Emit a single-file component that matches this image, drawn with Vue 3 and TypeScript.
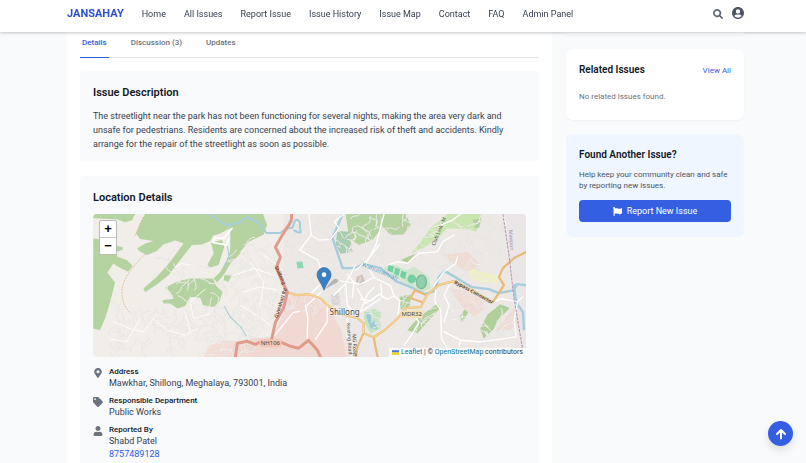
<script setup lang="ts">
import { ref } from 'vue'

const links = ['Home', 'All Issues', 'Report Issue', 'Issue History', 'Issue Map', 'Contact', 'FAQ', 'Admin Panel']
const tabs = ['Details', 'Discussion (3)', 'Updates']
const active = ref('Details')

const icons = {
  pin: { box: '0 0 384 512', d: 'M172.268 501.67C26.97 291.031 0 269.413 0 192 0 85.961 85.961 0 192 0s192 85.961 192 192c0 77.413-26.97 99.031-172.268 309.67-9.535 13.774-29.93 13.773-39.464 0zM192 272c44.183 0 80-35.817 80-80s-35.817-80-80-80-80 35.817-80 80 35.817 80 80 80z' },
  tag: { box: '0 0 512 512', d: 'M0 252.118V48C0 21.49 21.49 0 48 0h204.118a48 48 0 0 1 33.941 14.059l211.882 211.882c18.745 18.745 18.745 49.137 0 67.882L293.823 497.941c-18.745 18.745-49.137 18.745-67.882 0L14.059 286.059A48 48 0 0 1 0 252.118zM112 64c-26.51 0-48 21.49-48 48s21.49 48 48 48 48-21.49 48-48-21.49-48-48-48z' },
  user: { box: '0 0 448 512', d: 'M224 256c70.7 0 128-57.3 128-128S294.7 0 224 0 96 57.3 96 128s57.3 128 128 128zm89.6 32h-16.7c-22.2 10.2-46.9 16-72.9 16s-50.6-5.8-72.9-16h-16.7C60.2 288 0 348.2 0 422.4V464c0 26.5 21.5 48 48 48h352c26.5 0 48-21.5 48-48v-41.6c0-74.2-60.2-134.4-134.4-134.4z' },
}

const facts = [
  { icon: icons.pin, label: 'Address', value: 'Mawkhar, Shillong, Meghalaya, 793001, India', phone: '' },
  { icon: icons.tag, label: 'Responsible Department', value: 'Public Works', phone: '' },
  { icon: icons.user, label: 'Reported By', value: 'Shabd Patel', phone: '8757489128' },
]

// Minor streets: short wandering lines from a seeded generator, so every load draws the same town.
let seed = 7
const rand = () => {
  seed = (seed * 16807) % 2147483647
  return seed / 2147483647
}
function streets(count: number, x0: number, y0: number, w: number, h: number): string {
  let d = ''
  for (let i = 0; i < count; i++) {
    let x = x0 + rand() * w
    let y = y0 + rand() * h
    let a = rand() * 6.28
    d += `M${x.toFixed(1)} ${y.toFixed(1)}`
    for (let k = 0; k < 5; k++) {
      a += (rand() - 0.5) * 1.8
      x += Math.cos(a) * 3
      y += Math.sin(a) * 3
      d += `L${x.toFixed(1)} ${y.toFixed(1)}`
    }
  }
  return d
}
const minor = streets(130, 18, 95, 150, 46) + streets(90, 140, 30, 48, 75) + streets(140, 195, 5, 90, 95)
  + streets(240, 280, 5, 150, 135) + streets(20, 75, 45, 60, 40)
</script>

<template>
  <div class="page">
    <header class="bar">
      <a class="brand" href="#">JANSAHAY</a>
      <nav class="links">
        <a v-for="l in links" :key="l" href="#">{{ l }}</a>
      </nav>
      <button class="icon-btn search" aria-label="Search">
        <svg width="10" height="10" viewBox="-12 -12 536 536"><path d="M416 208c0 45.9-14.9 88.3-40 122.7L502.6 457.4c12.5 12.5 12.5 32.8 0 45.3s-32.8 12.5-45.3 0L330.7 376c-34.4 25.2-76.8 40-122.7 40C93.1 416 0 322.9 0 208S93.1 0 208 0S416 93.1 416 208zM208 352a144 144 0 1 0 0-288 144 144 0 1 0 0 288z" /></svg>
      </button>
      <button class="icon-btn account" aria-label="Account">
        <svg width="12" height="12" viewBox="0 8 496 496"><path d="M248 8C111 8 0 119 0 256s111 248 248 248 248-111 248-248S385 8 248 8zm0 96c48.6 0 88 39.4 88 88s-39.4 88-88 88-88-39.4-88-88 39.4-88 88-88zm0 344c-58.7 0-111.3-26.6-146.5-68.2 18.8-35.4 55.6-59.8 98.5-59.8 2.4 0 4.8.4 7.1 1.1 13 4.2 26.6 6.9 40.9 6.9 14.3 0 28-2.7 40.9-6.9 2.3-.7 4.7-1.1 7.1-1.1 42.9 0 79.7 24.4 98.5 59.8C359.3 421.4 306.7 448 248 448z" /></svg>
      </button>
    </header>

    <div class="body">
      <main class="panel">
        <div class="tabs" role="tablist">
          <button v-for="t in tabs" :key="t" role="tab" :aria-selected="active === t" :class="{ on: active === t }" @click="active = t">{{ t }}</button>
        </div>

        <section class="box">
          <h2>Issue Description</h2>
          <p class="story">The streetlight near the park has not been functioning for several nights, making the area very dark and unsafe for pedestrians. Residents are concerned about the increased risk of theft and accidents. Kindly arrange for the repair of the streetlight as soon as possible.</p>
        </section>

        <section class="box">
          <h2>Location Details</h2>
          <div class="map">
            <svg class="tiles" viewBox="0 0 432 143" preserveAspectRatio="xMidYMid slice" role="img" aria-label="Map of Shillong">
              <rect width="432" height="143" fill="#f1eee9" />
              <rect x="190" width="242" height="143" fill="#e9e6e2" opacity=".7" />
              <!-- land cover -->
              <g transform="translate(-3 -29) scale(.33333)" fill="#b5d3a0">
                <path d="M10 87H135L126 106 105 112 80 103 10 100ZM10 160 45 165 78 182 98 186 98 194 80 200 82 215 110 225 128 243 114 260 85 246 70 235 52 262 75 292 60 352 45 400 30 435 10 430Z" />
                <path d="M165 87 150 115 138 145 150 162 190 168 165 175 140 190 150 200 172 210 200 198 220 178 255 166 272 172 280 175 240 230 200 275 160 310 165 321 200 298 235 270 270 225 305 180 335 178 360 168 368 152 390 145 420 130 450 130V87Z" />
                <path d="M362 172 395 165 402 185 385 240 358 248 352 238 370 205ZM450 140 425 165 415 215 390 260 370 280 380 292 400 270 420 235 450 205ZM402 270 424 270 415 290 400 285Z" />
                <path d="M217 345 250 341 240 320 225 308 262 288 300 280 368 280 377 302 397 320 388 350 370 365 338 360 330 338 300 335 285 362 262 370 240 355 220 355Z" />
                <path d="M340 515 360 480 400 465 450 468V515Z" fill="#f3dcd6" />
              </g>
              <g transform="translate(137 -9) scale(.33333)" fill="#b5d3a0">
                <path d="M0 27H98L110 60 100 88 55 110 30 140 0 162Z" />
                <path d="M345 27H410L450 27V75L425 105 385 120 355 100 350 60Z" />
                <path d="M320 78 355 80 366 140 330 146 315 120Z" fill="#a9cdb0" />
                <path d="M165 265 230 270 290 300 330 370 350 455H0L10 415 60 400 125 395 160 320Z" fill="#f1d9d3" />
                <path d="M378 215 395 208 404 230 392 242 376 230Z" fill="#d0c5bc" />
                <path d="M300 270 325 262 330 300 305 300Z" fill="#d9d5d6" />
                <path d="M400 320 430 310 450 318V370L420 385 400 350Z" fill="#c2e4c0" />
                <path d="M404 325 416 318 424 345 445 355 440 372 420 370Z" fill="#9ccbd4" />
              </g>
              <g transform="translate(287 -9) scale(.33333)" fill="#c9e6b0">
                <path d="M0 27H75L90 60 68 88 30 90 5 65Z" fill="#b5d3a0" />
                <path d="M155 62 180 45 200 27H300L302 50 285 80 250 72 200 70 175 95 130 128 90 145 118 112Z" />
                <path d="M275 45 300 40 295 68 282 70ZM60 165 105 145 80 172ZM55 275 90 268 88 300 62 322ZM80 375 110 340 170 295 178 308 140 350 110 385ZM298 370 320 328 358 297 387 308 350 345 338 372 308 400ZM232 340 252 312 262 322 245 350Z" fill="#b0d09b" />
                <path d="M270 190 300 200 355 210 355 235 300 232 265 215Z" fill="#eef0c8" />
                <path d="M185 150 260 140 300 180 260 200 215 175ZM205 250 250 255 300 282 312 310 282 335 245 305ZM380 330 415 290 425 350 385 375 345 375Z" fill="#efdcd5" />
                <path d="M370 27H438V455H430L400 280Z" fill="#eae4e8" opacity=".6" />
                <path d="M10 190 22 178 40 180 80 195 100 185 145 215 150 250 120 262 70 235Z" fill="#cde6cb" />
              </g>
              <path :d="minor" fill="none" stroke="#d8d4d0" stroke-width=".9" />
              <path :d="minor" fill="none" stroke="#fdfcfb" stroke-width=".5" />
              <path d="M203 47.600 209 47.300 210 54 204 54.300Z" fill="#8bd8b2" />
              <g transform="translate(287 -9) scale(.33333)" fill="#74d0a4">
                <path d="M24 180 40 184 36 202 20 196ZM44 188 58 192 54 212 40 206ZM62 196 78 202 73 222 58 215Z" />
                <circle cx="93" cy="221" r="13" />
                <ellipse cx="122" cy="230" rx="15" ry="20" fill="#8fcfae" stroke="#7fb99b" stroke-width="4" />
              </g>
              <!-- rivers -->
              <g fill="none" stroke="#a5cddb" stroke-linejoin="round">
                <path d="M117 0 125 6 133 11 145 9 153 3 165 8 173 19 187 19C191 15 195 14 198 14S199 5 204 6 205 15 207 17 203 19 200 16" stroke-width="2" />
                <path d="M133 30C138 42 134 46 130 55M131 92 137 103 147 112 153 122" stroke-width="1" />
                <path d="M249 0 239 24 249 54 261 54 270 50 287 54 302 67 317 73 331 80 341 77 345 63 351 57 358 61 378 73 395 75 405 79 420 76 423 70 432 71M420 70 422 88 429 98 430 116" stroke-width="2.4" />
              </g>
              <path d="M50 3 42 22M52 40C36 56 28 68 29 80S33 92 36 98" fill="none" stroke="#e2ad82" stroke-width=".7" stroke-dasharray="2 1" />
              <!-- town roads -->
              <g fill="none" stroke="#fff" stroke-linejoin="round" stroke-linecap="round">
                <g transform="translate(-3 -29) scale(.33333)" stroke-width="2.5">
                  <path d="M425 130 400 160 375 158 367 172 410 180 415 160" stroke-width="5" />
                  <path d="M190 400 160 440 120 430 70 410M190 400 230 435 285 450 320 430M345 312 300 350 310 400 360 385M150 400 110 470 60 460M285 380 300 440M255 245 275 235 300 240" />
                </g>
                <g transform="translate(137 -9) scale(.33333)" stroke-width="4">
                  <path d="M235 27 242 90 208 135 262 165 270 190M242 90 265 105 300 103 325 70 312 50 340 27M245 262 275 232M225 300 232 340 230 400M230 300 270 262M290 300V350L255 402M133 390 188 322 207 318M310 270 345 235 375 180M345 235 350 300 375 330M375 195 410 165 445 120M380 250 405 295 450 265M350 340V400L380 430M390 320 450 280M405 385 375 425" />
                  <path d="M10 210 70 190 130 210M40 260 90 245 140 255M60 170 100 230 90 300M30 300 80 330 120 360M100 150 140 180" stroke-width="2.5" />
                </g>
                <g transform="translate(247 0) scale(.33333)" stroke-width="4">
                  <path d="M130 0 105 95 75 150 100 190 150 215 160 245 140 255 115 240 90 260 60 255M0 200 60 210 100 190M100 220 80 240 60 290M160 245 178 260 172 300M20 180 40 205 35 250M120 210 125 250" />
                </g>
                <g transform="translate(287 -9) scale(.33333)" stroke-width="4">
                  <path d="M20 180 50 170 80 175 115 145 170 140 185 110 220 90M160 240 190 200 225 175 230 155M165 250 162 290 180 315 182 400 200 430M205 240 190 270 205 300 190 350M335 292 360 280 410 290 425 275M410 290 400 340 405 395 370 400 300 410 240 405 190 380M240 405 230 440M100 330 115 350 95 385 70 420M180 60 215 45 240 27M365 27 375 60" />
                </g>
              </g>
              <!-- main roads -->
              <g fill="none" stroke-linejoin="round" stroke-linecap="round">
                <g stroke="#e9b978" stroke-width="2.2">
                  <path d="M193 78 204 81 215 80 227 84 234 91 244 99 264 104 270 109 270 119 280 123 292 115 304 104 312 94 327 93 333 81 321 76 317 84 329 88M333 81 345 71 360 67 374 74 399 88 410 71 405 63 409 54 420 44 432 38" />
                  <path d="M270 119 264 132 262 143M280 123 284 143" />
                </g>
                <path d="M193 78 204 81 215 80 227 84 234 91 244 99 264 104 270 109 270 119 280 123 292 115 304 104 312 94 327 93 333 81 345 71 360 67 374 74 399 88" stroke="#f8d58f" stroke-width="1.2" />
                <path d="M198 0C199 8 195 11 192 16L186 26 182 33 187 43 183 53 189 68 194 78 190 94 182 108 178 126M142 143 144 129 154 127 162 130 168 127M188 128 197 132 205 134 215 126 224 136 227 143" stroke="#e09c8a" stroke-width="3" />
              </g>
              <path d="M409 0 415 41 420 84 430 143" fill="none" stroke="#b294b4" stroke-width="1" stroke-dasharray="3 1" />
              <!-- labels -->
              <g class="lbl">
                <rect x="166" y="125" width="22" height="8" rx="2" fill="#f3c5b4" />
                <text x="177" y="131" text-anchor="middle" font-size="6">NH106</text>
                <rect x="307" y="96" width="22" height="8" rx="1" fill="#f6dfb5" />
                <text x="318" y="102" text-anchor="middle" font-size="6">MDR32</text>
                <text x="236" y="101" font-size="8" class="halo">Shillong</text>
                <g font-size="5" font-weight="600">
                  <text transform="translate(181 53) rotate(64)" fill="#6b3a30">Shillong</text>
                  <text transform="translate(184 104) rotate(-72)" fill="#6b3a30">Guwahati Rd</text>
                  <text transform="translate(360 69) rotate(29)">Bypass Connector</text>
                </g>
                <text font-size="5" transform="translate(341 32) rotate(-68)">Club Link - M</text>
                <text font-size="5" transform="translate(253 109) rotate(86)">Keating Road</text>
                <text font-size="5" transform="translate(259 120) rotate(88)">MG Road</text>
                <text font-size="6" fill="#6e9fc4" transform="translate(268 52) rotate(22)">Wahumkhrah</text>
                <text font-size="5" fill="#a684a8" transform="translate(415 16) rotate(86)">Mawpun</text>
              </g>
              <!-- marker -->
              <path d="M231 75 240 65Q246 64 244 68Z" fill="#555" opacity=".35" />
              <path d="M230.500 76C228 69 223.500 65 223.500 60.500A7 7 0 0 1 237.500 60.500C237.500 65 233 69 230.500 76Z" fill="#3a80c0" stroke="#2e6b9f" stroke-width=".6" />
              <circle cx="230.500" cy="60.500" r="2.300" fill="#fff" />
            </svg>
            <div class="zoomer">
              <button aria-label="Zoom in">+</button>
              <button aria-label="Zoom out">−</button>
            </div>
            <div class="credit">
              <svg width="7" height="5" viewBox="0 0 12 8"><path fill="#4C7BE1" d="M0 0h12v4H0z" /><path fill="#FFD500" d="M0 4h12v3H0z" /><path fill="#E0BC00" d="M0 7h12v1H0z" /></svg>
              <span><a href="#">Leaflet</a> | © <a href="#">OpenStreetMap</a> contributors</span>
            </div>
          </div>

          <dl class="facts">
            <div v-for="f in facts" :key="f.label" class="fact">
              <svg width="10" height="10" :viewBox="f.icon.box"><path :d="f.icon.d" /></svg>
              <div>
                <dt>{{ f.label }}</dt>
                <dd>{{ f.value }}</dd>
                <dd v-if="f.phone"><a :href="'tel:' + f.phone">{{ f.phone }}</a></dd>
              </div>
            </div>
          </dl>
        </section>
      </main>

      <aside class="side">
        <div class="card tail"></div>
        <section class="card related">
          <div class="row">
            <h3>Related Issues</h3>
            <a href="#">View All</a>
          </div>
          <p>No related issues found.</p>
        </section>
        <section class="card found">
          <h3>Found Another Issue?</h3>
          <p>Help keep your community clean and safe by reporting new issues.</p>
          <button class="report">
            <svg width="9" height="9" viewBox="0 0 512 512"><path d="M349.565 98.783C295.978 98.783 251.721 64 184.348 64c-24.955 0-47.309 4.384-68.045 12.013a55.947 55.947 0 0 0 3.586-23.562C118.117 24.015 94.806 1.206 66.338.048 34.345-1.254 8 24.296 8 56c0 19.026 9.497 35.825 24 45.945V488c0 13.255 10.745 24 24 24h16c13.255 0 24-10.745 24-24v-94.4c28.311-12.064 63.582-22.122 114.435-22.122 53.588 0 97.844 34.783 165.217 34.783 48.169 0 86.667-16.294 122.505-40.858C506.84 359.452 512 349.571 512 339.045v-243.1c0-23.393-24.269-38.87-45.485-29.016-34.338 15.948-76.454 31.854-116.95 31.854z" /></svg>
            Report New Issue
          </button>
        </section>
      </aside>
    </div>

    <button class="to-top" aria-label="Back to top">
      <svg width="12" height="12" viewBox="0 0 12 12"><path d="M6 10.500V2M2 6 6 2l4 4" /></svg>
    </button>
  </div>
</template>

<style>
body { background: #f9fafb; }
</style>

<style scoped>
.page {
  height: 100vh;
  overflow-y: auto;
  scrollbar-width: none;
  background: #f9fafb;
  color: #374151;
  font: 9px/13px Roboto, "Liberation Sans", sans-serif;
}
h2, h3, p, dl, dd { margin: 0; }
a { color: #2f5be3; text-decoration: none; }
button { border: 0; padding: 0; background: none; font: inherit; color: inherit; cursor: pointer; }
svg { display: block; }

.bar {
  position: sticky;
  top: 0;
  z-index: 5;
  box-sizing: border-box;
  height: 32px;
  display: flex;
  align-items: center;
  padding: 0 62px 4px 67px;
  background: #fff;
  box-shadow: 0 1px 3px rgba(0, 0, 0, .22);
}
.brand { font-size: 11px; line-height: 16px; font-weight: 700; color: #2c4fd8; }
.links { flex: 1; display: flex; gap: 18px; padding-left: 18px; }
.links a { color: #374151; white-space: nowrap; }
.icon-btn svg { fill: #4b5563; }
.search path { stroke: #4b5563; stroke-width: 22; }
.account { margin-left: 9px; padding-bottom: 3px; }

.body {
  display: grid;
  grid-template-columns: minmax(0, 1fr) 178px;
  gap: 14px;
  padding: 0 62px 0 67px;
}
.panel { padding: 0 13px; background: #fff; }
.tabs {
  display: flex;
  gap: 20px;
  margin-bottom: 13px;
  border-bottom: 1px solid #e5e7eb;
}
.tabs button {
  margin-bottom: -1px;
  padding: 5px 2px 9px;
  border-bottom: 1px solid transparent;
  font-size: 8px;
  line-height: 11px;
  font-weight: 500;
  color: #6b7280;
}
.tabs .on { border-color: #2f5be3; color: #2f5be3; }

.box { margin-bottom: 14px; padding: 14px 13px 11px; border-radius: 4px; background: #f9fafb; }
h2 { margin-bottom: 8px; font-size: 11px; line-height: 16px; font-weight: 600; color: #111827; }
.story { line-height: 14px; }

.map { position: relative; overflow: hidden; border-radius: 4px; }
.tiles { width: 100%; }
.lbl { font-family: "Noto Sans", sans-serif; fill: #4a4643; }
.halo { stroke: #fff; stroke-width: 1px; paint-order: stroke; stroke-opacity: .7; }
.zoomer {
  position: absolute;
  top: 6px;
  left: 6px;
  display: flex;
  flex-direction: column;
  border: 1px solid #bdbdb9;
  border-radius: 2px;
  background: #fff;
}
.zoomer button { width: 16px; height: 16px; font: bold 13px/16px "Liberation Sans", sans-serif; color: #000; }
.zoomer button + button { height: 17px; border-top: 1px solid #ccc; }
.credit {
  position: absolute;
  right: 0;
  bottom: 0;
  display: flex;
  align-items: center;
  gap: 2px;
  padding: 0 3px;
  background: rgba(255, 255, 255, .8);
  font-size: 7px;
  line-height: 9px;
  color: #333;
}
.credit a { color: #0078a8; }

.facts { display: grid; gap: 5px; margin-top: 9px; }
.fact { display: flex; gap: 6px; }
.fact svg { margin-top: 2px; fill: #6b7280; }
.fact dt { font-size: 8px; line-height: 11px; font-weight: 500; color: #111827; }

.side { display: flex; flex-direction: column; gap: 14px; }
.card { padding: 13px; border-radius: 7px; background: #fff; box-shadow: 0 1px 2px rgba(0, 0, 0, .04); }
.card.tail { height: 3px; padding: 0; border-radius: 0 0 7px 7px; }
.card p { font-size: 8px; line-height: 11px; }
h3 { font-size: 10px; line-height: 16px; font-weight: 600; color: #111827; }
.row { display: flex; align-items: center; justify-content: space-between; margin-bottom: 13px; font-size: 8px; }
.related p { color: #6b7280; padding-bottom: 5px; }
.card.found { padding-bottom: 15px; background: #eff6ff; box-shadow: none; }
.found p { margin: 6px 0 9px; color: #4b5563; }
.report {
  display: flex;
  align-items: center;
  justify-content: center;
  gap: 5px;
  width: 100%;
  height: 22px;
  border-radius: 4px;
  background: #345fe2;
  color: #fff;
}
.report svg { fill: #fff; }

.to-top {
  position: fixed;
  right: 13px;
  bottom: 17px;
  display: grid;
  place-items: center;
  width: 25px;
  height: 25px;
  border-radius: 50%;
  background: #345fe2;
  box-shadow: 0 4px 8px rgba(0, 0, 0, .12);
}
.to-top path { fill: none; stroke: #fff; stroke-width: 2; stroke-linecap: round; stroke-linejoin: round; }
</style>
